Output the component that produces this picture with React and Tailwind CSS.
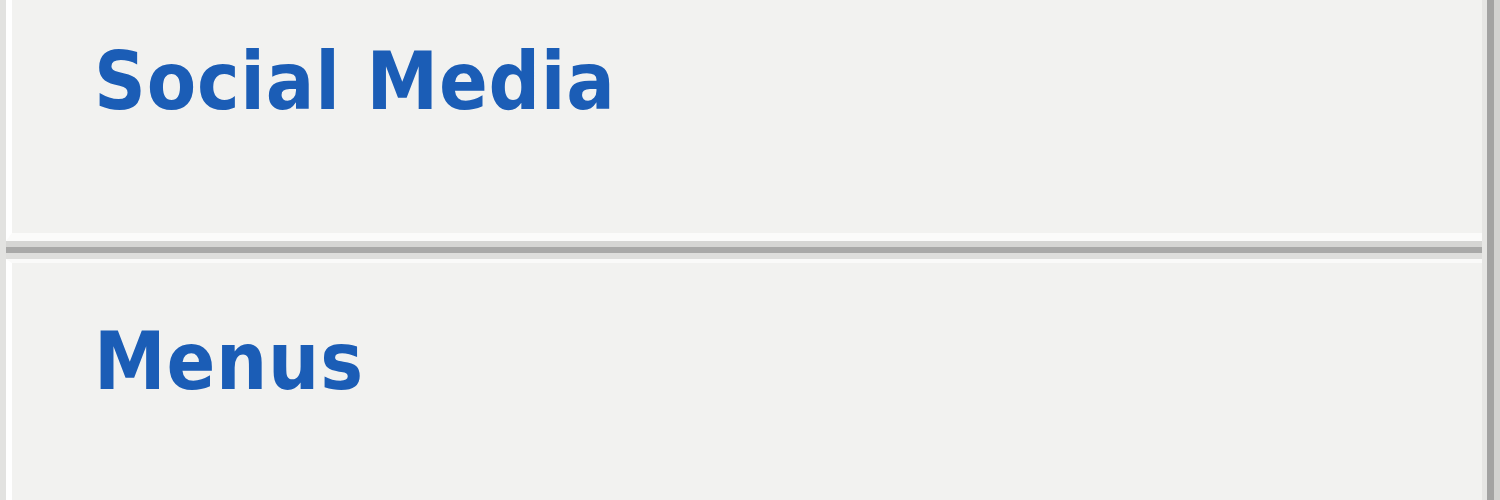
import React from 'react';

const sections = ['Social Media', 'Menus'];

const Section = ({ title, first }) => (
  <div
    className={`bg-[#f2f2f0] border-l-[6px] border-white ${
      first ? 'h-[241px] border-b-[8px] pt-[42px] border-b-[#fbfbfa]' : 'flex-1 border-t-[4px] border-t-[#fafaf9] pt-[59px]'
    } pl-[82px]`}
  >
    <h2 className="text-[80px] leading-none font-bold tracking-[0.8px] text-[#1b5db6] font-['DejaVu_Sans_Condensed','DejaVu_Sans',sans-serif] [font-stretch:condensed]">
      {title}
    </h2>
  </div>
);

export default function App() {
  return (
    <div className="w-[1500px] h-[500px] flex bg-[#e1e1df] overflow-hidden">
      <div className="w-[6px] bg-[#e2e2e0]" />
      <div className="flex-1 flex flex-col">
        <Section title={sections[0]} first />
        <div className="h-[18px] flex flex-col">
          <div className="h-[6px] bg-[#d6d6d4]" />
          <div className="h-[6px] bg-[#a9a9a8]" />
          <div className="h-[6px] bg-[#dededc]" />
        </div>
        <Section title={sections[1]} />
      </div>
      <div className="w-[5px] bg-[#e6e6e4]" />
      <div className="w-[7px] bg-[#a3a3a2]" />
      <div className="w-[6px] bg-[#d2d2d0]" />
    </div>
  );
}
